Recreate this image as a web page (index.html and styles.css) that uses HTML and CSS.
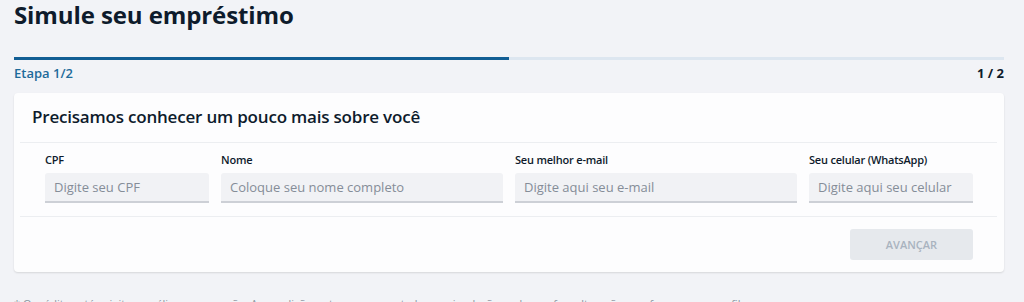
FILE: index.html
```html
<!DOCTYPE html>
<html>
<head>
    <meta charset="utf-8">
    <title>Simule seu empréstimo</title>
    <link rel="stylesheet" href="styles.css">
</head>
<body>
    <div class="page">
        <h1 class="title">Simule seu empréstimo</h1>

        <div class="progress">
            <div class="progress-fill" style="width: 50%"></div>
        </div>
        <div class="steps">
            <span class="step-name">Etapa 1/2</span>
            <span class="step-count">1 / 2</span>
        </div>

        <div class="card">
            <div class="card-header">
                <h2>Precisamos conhecer um pouco mais sobre você</h2>
            </div>
            <div class="card-body">
                <div class="field">
                    <label>CPF</label>
                    <input type="text" placeholder="Digite seu CPF">
                </div>
                <div class="field">
                    <label>Nome</label>
                    <input type="text" placeholder="Coloque seu nome completo">
                </div>
                <div class="field">
                    <label>Seu melhor e-mail</label>
                    <input type="text" placeholder="Digite aqui seu e-mail">
                </div>
                <div class="field">
                    <label>Seu celular (WhatsApp)</label>
                    <input type="text" placeholder="Digite aqui seu celular">
                </div>
            </div>
            <div class="card-footer">
                <button class="btn-next" disabled>AVANÇAR</button>
            </div>
        </div>

        <p class="disclaimer">* O crédito está sujeito a análise e aprovação. As condições e taxas apresentadas na simulação podem sofrer alterações conforme o seu perfil.</p>
    </div>
</body>
</html>
```

FILE: styles.css
```css
body {
    margin: 0;
    background-color: #f2f3f7;
    font-family: "Open Sans", "Noto Sans", sans-serif;
    color: #0e1b2c;
}
.page {
    padding: 0 20px 0 14px;
}
.title {
    margin: 0;
    font-size: 24px;
    line-height: 30px;
    font-weight: 700;
    letter-spacing: -0.1px;
}
.progress {
    margin-top: 27px;
    height: 3px;
    background-color: #dde6f0;
}
.progress-fill {
    height: 100%;
    background-color: #125e94;
}
.steps {
    display: flex;
    justify-content: space-between;
    margin-top: 5px;
    font-size: 13px;
    line-height: 16px;
    font-weight: 600;
}
.step-name {
    color: #1e6a9a;
}
.step-count {
    font-weight: 700;
    color: #0e1b2c;
}
.card {
    margin-top: 12px;
    background-color: #fdfdfe;
    border-radius: 4px;
    box-shadow: 0 1px 2px rgba(0,0,0,0.12);
    padding: 0 7px 0 6px;
}
.card-header {
    padding: 12px 12px 13px;
    border-bottom: 1px solid #eceef1;
}
.card-header h2 {
    margin: 0;
    font-size: 17px;
    line-height: 24px;
    font-weight: 600;
    letter-spacing: -0.2px;
}
.card-body {
    display: grid;
    grid-template-columns: 164fr 282fr 282fr 164fr;
    gap: 12px;
    padding: 10px 24px 13px 25px;
    border-bottom: 1px solid #eceef1;
}
.field label {
    display: block;
    font-size: 11px;
    line-height: 14px;
    font-weight: 600;
    letter-spacing: -0.2px;
    margin-bottom: 6px;
}
.field input {
    box-sizing: border-box;
    width: 100%;
    height: 30px;
    padding: 0 9px;
    border: none;
    border-bottom: 2px solid #cdd0d6;
    border-radius: 3px 3px 0 0;
    background-color: #f1f2f5;
    font-family: inherit;
    font-size: 13px;
    color: #0e1b2c;
}
.field input::placeholder {
    color: #858d98;
}
.card-footer {
    display: flex;
    justify-content: flex-end;
    padding: 12px 24px 12px 0;
}
.btn-next {
    width: 123px;
    height: 31px;
    border: none;
    border-radius: 3px;
    background-color: #e6e9ed;
    color: #a9b3bf;
    font-family: inherit;
    font-size: 11px;
    font-weight: 600;
}
.disclaimer {
    margin: 24px 0 0;
    font-size: 11px;
    line-height: 16px;
    color: #8a939e;
}
```
